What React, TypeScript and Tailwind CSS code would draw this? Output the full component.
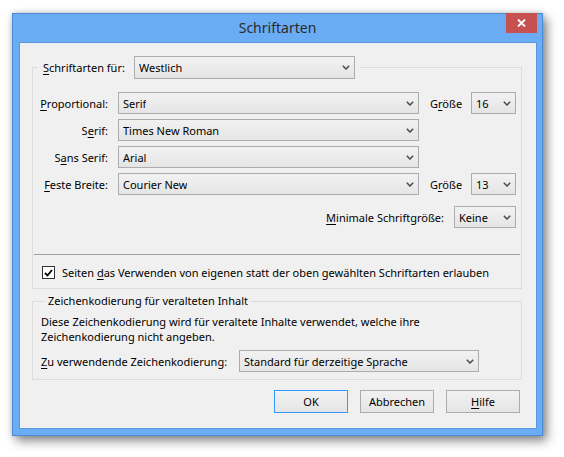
import React from "react";

const font = { fontFamily: '"Noto Sans", "Open Sans", sans-serif' };

function Chevron() {
  return (
    <svg width="8" height="5" viewBox="0 0 8 5" className="shrink-0">
      <polyline points="0.8,0.8 4,4 7.2,0.8" fill="none" stroke="#4a4a4a" strokeWidth="1.5" />
    </svg>
  );
}

function Combo({ text, w, h = 22 }: { text: string; w: string; h?: number }) {
  return (
    <div
      className={`${w} ${h === 23 ? "h-[23px]" : "h-[22px]"} flex items-center justify-between pl-[4px] pr-[4px] border border-[#acacac] bg-linear-to-b from-[#f2f2f2] to-[#e5e5e5] text-black`}
    >
      <span className="truncate">{text}</span>
      <Chevron />
    </div>
  );
}

function Key({ children }: { children: React.ReactNode }) {
  return <span className="underline underline-offset-[2px] decoration-1">{children}</span>;
}

function FontRow({
  label,
  value,
  size,
}: {
  label: React.ReactNode;
  value: string;
  size?: string;
}) {
  return (
    <div className="flex items-center h-[22px]">
      <div className="w-[75px] text-right whitespace-nowrap">{label}</div>
      <div className="ml-[10px]">
        <Combo text={value} w="w-[301px]" />
      </div>
      {size && (
        <>
          <div className="ml-[11px] w-[41px] whitespace-nowrap">
            G<Key>r</Key>öße
          </div>
          <Combo text={size} w="w-[45px]" />
        </>
      )}
    </div>
  );
}

function Button({ children, primary }: { children: React.ReactNode; primary?: boolean }) {
  return (
    <div
      className={`w-[74px] h-[23px] flex items-center justify-center border bg-linear-to-b from-[#f2f2f2] to-[#e5e5e5] text-black ${
        primary ? "border-[#3399ff]" : "border-[#acacac]"
      }`}
    >
      {children}
    </div>
  );
}

export default function App() {
  return (
    <div className="w-[564px] h-[457px] bg-white overflow-hidden text-[11px] leading-[15px] text-black" style={font}>
      <div className="ml-[12px] mt-[13px] w-[531px] h-[423px] flex flex-col bg-[#6badf5] border border-[#4f8ad6] shadow-[0_0_6px_rgba(0,0,0,0.18),4px_5px_10px_rgba(0,0,0,0.45)]">
        {/* title bar */}
        <div className="h-[28px] shrink-0 grid grid-cols-[1fr_auto_1fr] items-start">
          <div />
          <div className="pt-[5px] text-[14px] leading-[18px] text-[#2a2a2a]">Schriftarten</div>
          <div className="flex justify-end pr-[5px]">
            <div className="-mt-px w-[31px] h-[20px] bg-[#c75050] flex items-center justify-center">
              <svg width="9" height="8" viewBox="0 0 9 8">
                <path d="M1 0.5 L8 7.5 M8 0.5 L1 7.5" stroke="#fff" strokeWidth="1.8" />
              </svg>
            </div>
          </div>
        </div>

        {/* client area */}
        <div className="ml-[6px] mr-[5px] mb-[6px] flex-1 bg-[#f0f0f0] shadow-[inset_0_0_0_1px_#5b97e0] pt-[14px] pl-[13px] pr-[15px] flex flex-col">
          <fieldset className="border border-[#dcdcdc] pb-[9px]">
            <legend className="ml-[5px] px-[5px]">
              <div className="flex items-center">
                <div className="w-[91px] whitespace-nowrap">
                  <Key>S</Key>chriftarten für:
                </div>
                <Combo text="Westlich" w="w-[221px]" h={23} />
              </div>
            </legend>

            <div className="pt-[13px] flex flex-col gap-[5px]">
              <FontRow label={<><Key>P</Key>roportional:</>} value="Serif" size="16" />
              <FontRow label={<>S<Key>e</Key>rif:</>} value="Times New Roman" />
              <FontRow label={<>S<Key>a</Key>ns Serif:</>} value="Arial" />
              <FontRow label={<><Key>F</Key>este Breite:</>} value="Courier New" size="13" />
            </div>

            <div className="mt-[11px] flex items-center justify-end pr-[5px] h-[22px]">
              <div className="whitespace-nowrap">
                <Key>M</Key>inimale Schriftgröße:
              </div>
              <div className="ml-[10px]">
                <Combo text="Keine" w="w-[62px]" />
              </div>
            </div>

            <div className="mt-[26px] mx-[1px] h-px bg-[#a0a0a0]" />

            <div className="mt-[11px] pl-[9px] flex items-center h-[13px]">
              <div className="w-[13px] h-[13px] border border-[#333] bg-white flex items-center justify-center shrink-0">
                <svg width="9" height="8" viewBox="0 0 9 8">
                  <path d="M1 4 L3.5 6.5 L8 1" fill="none" stroke="#000" strokeWidth="1.8" />
                </svg>
              </div>
              <div className="ml-[7px] whitespace-nowrap">
                Seiten <Key>d</Key>as Verwenden von eigenen statt der oben gewählten Schriftarten erlauben
              </div>
            </div>
          </fieldset>

          <fieldset className="mt-[4px] border border-[#dcdcdc] pl-[8px] pb-[7px]">
            <legend className="ml-[4px] pl-[3px] pr-[2px] leading-[16px]">Zeichenkodierung für veralteten Inhalt</legend>
            <div className="pt-[5px]">
              Diese Zeichenkodierung wird für veraltete Inhalte verwendet, welche ihre
              <br />
              Zeichenkodierung nicht angeben.
            </div>
            <div className="mt-[6px] flex items-center h-[22px]">
              <div className="w-[198px] whitespace-nowrap">
                <Key>Z</Key>u verwendende Zeichenkodierung:
              </div>
              <Combo text="Standard für derzeitige Sprache" w="w-[240px]" />
            </div>
          </fieldset>

          <div className="mt-[10px] flex justify-end gap-[12px] pr-[2px]">
            <Button primary>OK</Button>
            <Button>Abbrechen</Button>
            <Button>
              <span>
                <Key>H</Key>ilfe
              </span>
            </Button>
          </div>
        </div>
      </div>
    </div>
  );
}
